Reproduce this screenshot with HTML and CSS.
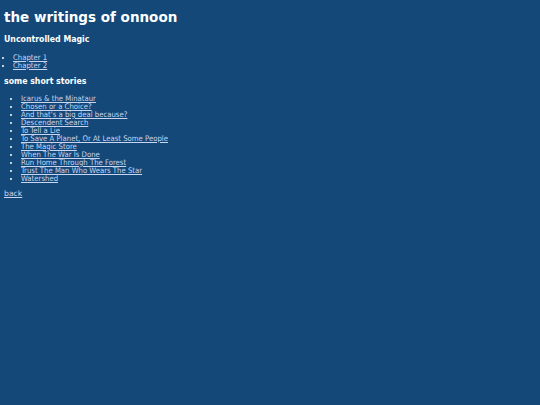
FILE: index.html
```html
<!DOCTYPE html>
<html>
<head>
<meta charset="utf-8">
<link rel="stylesheet" href="styles.css">
</head>
<body>
<h1 class="title">the writings of onnoon</h1>
<h2 class="section">Uncontrolled Magic</h2>
<ul class="list chapters">
<li><a href="#">Chapter 1</a></li>
<li><a href="#">Chapter 2</a></li>
</ul>
<h2 class="section section-stories">some short stories</h2>
<ul class="list stories">
<li><a href="#">Icarus &amp; the Minataur</a></li>
<li><a href="#">Chosen or a Choice?</a></li>
<li><a href="#">And that's a big deal because?</a></li>
<li><a href="#">Descendent Search</a></li>
<li><a href="#">To Tell a Lie</a></li>
<li><a href="#">To Save A Planet, Or At Least Some People</a></li>
<li><a href="#">The Magic Store</a></li>
<li><a href="#">When The War Is Done</a></li>
<li><a href="#">Run Home Through The Forest</a></li>
<li><a href="#">Trust The Man Who Wears The Star</a></li>
<li><a href="#">Watershed</a></li>
</ul>
<p class="back"><a href="#">back</a></p>
</body>
</html>
```
FILE: styles.css
```css
html { background: #134878; }
body {
  margin: 0;
  padding: 4px;
  background: #134878;
  color: #ffffff;
  font-family: "DejaVu Sans", Verdana, sans-serif;
  font-size: 7.7px;
}
a { color: #c8d6f2; }
.title { font-size: 13.5px; margin: 5px 0 9px; line-height: 16px; }
.section {
  font-family: "DejaVu Sans Condensed", "DejaVu Sans", sans-serif;
  font-stretch: condensed;
  font-size: 8.7px;
  margin: 0 0 10px;
  line-height: 10px;
}
.section-stories { margin-bottom: 9px; }
.list {
  font-family: "DejaVu Sans Condensed", "DejaVu Sans", sans-serif;
  font-stretch: condensed;
  margin: 0 0 6px;
  line-height: 8px;
}
.chapters { padding-left: 9px; }
.stories { padding-left: 17px; margin-bottom: 7px; }
.back { margin: 0; line-height: 8px; }
```
